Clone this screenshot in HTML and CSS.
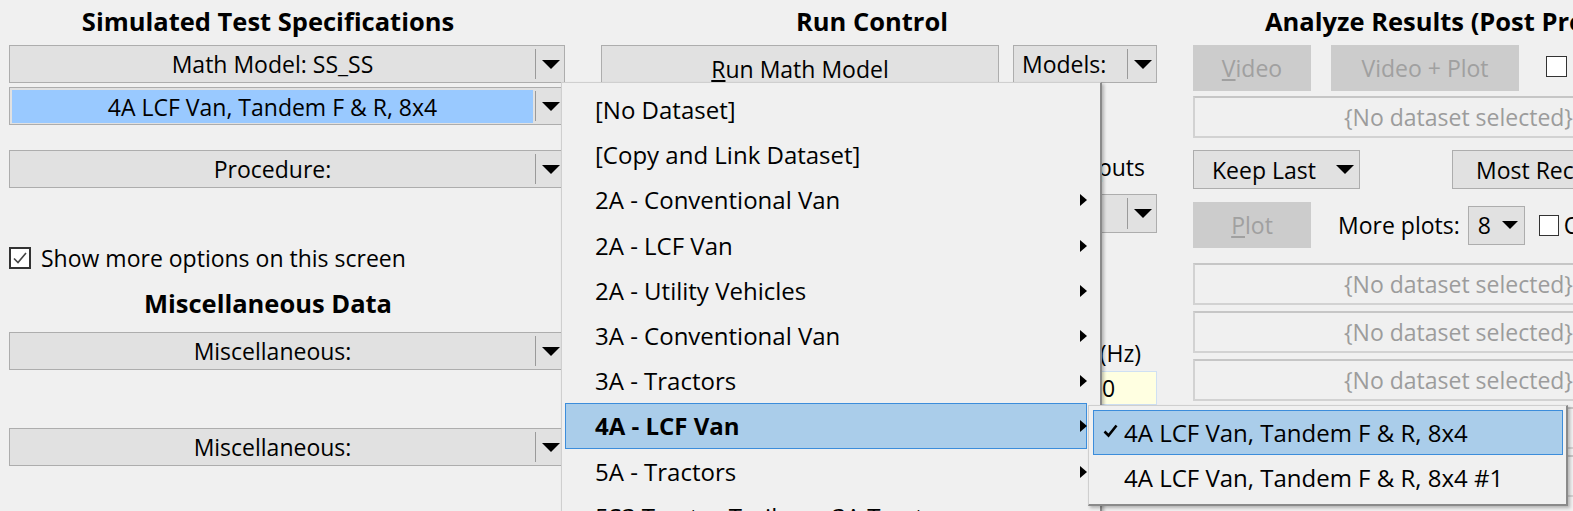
FILE: index.html
```html
<!DOCTYPE html>
<html>
<head>
<meta charset="utf-8">
<link rel="stylesheet" href="styles.css">
</head>
<body>
<div class="screen">
  <section class="col col-left">
    <h2 class="title title-left">Simulated Test Specifications</h2>
    <div class="combo"><span class="combo-text">Math Model: SS_SS</span><span class="combo-btn"><svg width="18" height="9" viewBox="0 0 18 9"><path d="M0 0H18L9 9Z"/></svg></span></div>
    <div class="combo combo-sel gap-4"><span class="combo-text"><span class="sel-fill">4A LCF Van, Tandem F &amp; R, 8x4</span></span><span class="combo-btn"><svg width="18" height="9" viewBox="0 0 18 9"><path d="M0 0H18L9 9Z"/></svg></span></div>
    <div class="combo gap-25"><span class="combo-text">Procedure:</span><span class="combo-btn"><svg width="18" height="9" viewBox="0 0 18 9"><path d="M0 0H18L9 9Z"/></svg></span></div>
    <label class="check-row">
      <span class="checkbox checked"><svg width="18" height="18" viewBox="0 0 18 18"><path d="M3 9.5L7 13.5L15 4" fill="none" stroke="#444" stroke-width="1.6"/></svg></span>
      <span>Show more options on this screen</span>
    </label>
    <h2 class="title title-left title-misc">Miscellaneous Data</h2>
    <div class="combo gap-4"><span class="combo-text">Miscellaneous:</span><span class="combo-btn"><svg width="18" height="9" viewBox="0 0 18 9"><path d="M0 0H18L9 9Z"/></svg></span></div>
    <div class="combo gap-58"><span class="combo-text">Miscellaneous:</span><span class="combo-btn"><svg width="18" height="9" viewBox="0 0 18 9"><path d="M0 0H18L9 9Z"/></svg></span></div>
  </section>

  <section class="col col-mid">
    <h2 class="title title-mid">Run Control</h2>
    <div class="mid-row">
      <div class="button run-btn"><span><u>R</u>un Math Model</span></div>
      <div class="combo combo-models"><span class="combo-text left">Models:</span><span class="combo-btn"><svg width="18" height="9" viewBox="0 0 18 9"><path d="M0 0H18L9 9Z"/></svg></span></div>
    </div>
    <div class="mid-label label-outputs">Outputs</div>
    <div class="combo combo-small"><span class="combo-text"></span><span class="combo-btn"><svg width="18" height="9" viewBox="0 0 18 9"><path d="M0 0H18L9 9Z"/></svg></span></div>
    <div class="mid-label label-hz">Rate (Hz)</div>
    <div class="yellow-input">0</div>
  </section>

  <section class="col col-right">
    <h2 class="title title-right">Analyze Results (Post Processing)</h2>
    <div class="right-row row-video">
      <div class="button disabled btn-video"><span><u>V</u>ideo</span></div>
      <div class="button disabled btn-vplot"><span>Video + Plot</span></div>
      <span class="checkbox cb-video"></span>
    </div>
    <div class="ds-box first-box">{No dataset selected}</div>
    <div class="right-row row-keep">
      <div class="keep-drop"><span>Keep Last</span><svg width="18" height="9" viewBox="0 0 18 9"><path d="M0 0H18L9 9Z"/></svg></div>
      <div class="button btn-recent"><span>Most Recent</span></div>
    </div>
    <div class="right-row row-plot">
      <div class="button disabled btn-plot"><span><u>P</u>lot</span></div>
      <span class="more-label">More plots:</span>
      <div class="num-drop"><span>8</span><svg width="16" height="8" viewBox="0 0 18 9"><path d="M0 0H18L9 9Z"/></svg></div>
      <span class="checkbox cb-overlay"></span>
      <span class="overlay-label">Overlay</span>
    </div>
    <div class="ds-box box-a">{No dataset selected}</div>
    <div class="ds-box">{No dataset selected}</div>
    <div class="ds-box">{No dataset selected}</div>
    <div class="ds-box"></div>
    <div class="ds-box"></div>
  </section>

  <div class="menu">
    <div class="menu-item">[No Dataset]</div>
    <div class="menu-item">[Copy and Link Dataset]</div>
    <div class="menu-item sub">2A - Conventional Van<svg class="arr" width="7" height="12" viewBox="0 0 7 12"><path d="M0 0L7 6L0 12Z"/></svg></div>
    <div class="menu-item sub">2A - LCF Van<svg class="arr" width="7" height="12" viewBox="0 0 7 12"><path d="M0 0L7 6L0 12Z"/></svg></div>
    <div class="menu-item sub">2A - Utility Vehicles<svg class="arr" width="7" height="12" viewBox="0 0 7 12"><path d="M0 0L7 6L0 12Z"/></svg></div>
    <div class="menu-item sub">3A - Conventional Van<svg class="arr" width="7" height="12" viewBox="0 0 7 12"><path d="M0 0L7 6L0 12Z"/></svg></div>
    <div class="menu-item sub">3A - Tractors<svg class="arr" width="7" height="12" viewBox="0 0 7 12"><path d="M0 0L7 6L0 12Z"/></svg></div>
    <div class="menu-item sub active">4A - LCF Van<svg class="arr" width="7" height="12" viewBox="0 0 7 12"><path d="M0 0L7 6L0 12Z"/></svg></div>
    <div class="menu-item sub">5A - Tractors<svg class="arr" width="7" height="12" viewBox="0 0 7 12"><path d="M0 0L7 6L0 12Z"/></svg></div>
    <div class="menu-item sub">5S3 Tractor Trailers - 3A Tractors<svg class="arr" width="7" height="12" viewBox="0 0 7 12"><path d="M0 0L7 6L0 12Z"/></svg></div>
  </div>

  <div class="submenu">
    <div class="menu-item sub-item active"><svg class="check" width="15" height="14" viewBox="0 0 15 14"><path d="M1.5 7.5L5.5 11.5L13.5 1.5" fill="none" stroke="#000" stroke-width="2.6"/></svg>4A LCF Van, Tandem F &amp; R, 8x4</div>
    <div class="menu-item sub-item">4A LCF Van, Tandem F &amp; R, 8x4 #1</div>
  </div>
</div>
</body>
</html>
```

FILE: styles.css
```css
* { box-sizing: border-box; }
html, body {
  margin: 0;
  padding: 0;
  background: #f0f0f0;
}
body {
  width: 1573px;
  height: 511px;
  overflow: hidden;
  font-family: "Open Sans", "Noto Sans", sans-serif;
  font-size: 23px;
  color: #000;
}
.screen {
  position: relative;
  width: 1573px;
  height: 511px;
  display: flex;
  align-items: flex-start;
  padding-left: 9px;
}
.col {
  display: flex;
  flex-direction: column;
  flex: none;
}
.col-left { width: 556px; }
.col-mid { width: 556px; margin-left: 36px; }
.col-right { width: 420px; margin-left: 36px; }

.title {
  margin: 0 0 3px 0;
  height: 42px;
  line-height: 42px;
  font-size: 25.5px;
  font-weight: 700;
  white-space: nowrap;
}
.title-left { text-align: center; padding-right: 38px; }
.title-mid { text-align: center; padding-right: 14px; }
.title-right { padding-left: 72px; }
.title-misc { margin-top: 11px; margin-bottom: 4px; }

.combo {
  display: flex;
  height: 38px;
  border: 1px solid #adadad;
  background: #e1e1e1;
  flex: none;
}
.gap-4 { margin-top: 4px; }
.gap-25 { margin-top: 25px; }
.gap-58 { margin-top: 58px; }
.combo-text {
  flex: 1;
  display: flex;
  align-items: center;
  justify-content: center;
  padding: 1px;
  white-space: nowrap;
}
.combo-text.left { justify-content: flex-start; padding-left: 8px; }
.combo-btn {
  flex: none;
  width: 29px;
  display: flex;
  align-items: center;
  justify-content: center;
  position: relative;
  padding-left: 3px;
}
.combo-btn::before {
  content: "";
  position: absolute;
  left: 0;
  top: 3px;
  bottom: 3px;
  width: 1px;
  background: #9a9a9a;
}
.combo-sel .combo-text { padding: 2px 2px 1px 2px; }
.sel-fill {
  flex: 1;
  align-self: stretch;
  background: #99c9ff;
  display: flex;
  align-items: center;
  justify-content: center;
}

.check-row {
  display: flex;
  align-items: center;
  gap: 10px;
  height: 26px;
  margin-top: 57px;
  white-space: nowrap;
}
.checkbox {
  width: 22px;
  height: 22px;
  border: 2px solid #333;
  background: #fff;
  display: flex;
  align-items: center;
  justify-content: center;
  flex: none;
}

.mid-row {
  display: flex;
  align-items: flex-start;
  gap: 14px;
}
.button {
  border: 1px solid #adadad;
  background: #e1e1e1;
  display: flex;
  align-items: center;
  justify-content: center;
  white-space: nowrap;
  flex: none;
}
.run-btn { width: 398px; height: 48px; }
.combo-models { width: 144px; }
.mid-label {
  text-align: right;
  height: 30px;
  line-height: 30px;
  white-space: nowrap;
}
.label-outputs { margin-top: 59px; padding-right: 12px; }
.combo-small { margin-top: 12px; width: 144px; align-self: flex-end; height: 39px; }
.label-hz { margin-top: 105px; padding-right: 16px; }
.yellow-input {
  margin-top: 3px;
  align-self: flex-end;
  width: 59px;
  height: 34px;
  background: #ffffe1;
  border: 1px solid #cfe0f3;
  line-height: 32px;
  padding-left: 3px;
}

.right-row {
  display: flex;
  align-items: flex-start;
}
.right-row > * { flex: none; }
.disabled {
  background: #cccccc;
  border-color: #cccccc;
  color: #a0a0a0;
}
.btn-video { width: 118px; height: 46px; }
.btn-vplot { width: 188px; height: 46px; margin-left: 20px; }
.cb-video { width: 21px; height: 21px; border-width: 1px; border-color: #333; margin-left: 27px; margin-top: 11px; }
.ds-box {
  height: 42px;
  border: 2px solid #d2d2d2;
  border-top-color: #c6c6c6;
  background: #f0f0f0;
  color: #9c9c9c;
  display: flex;
  align-items: center;
  justify-content: flex-end;
  padding-right: 36px;
  white-space: nowrap;
  margin-top: 6px;
  width: 418px;
  flex: none;
}
.first-box { margin-top: 5px; }
.box-a { margin-top: 15px; }
.row-keep { margin-top: 12px; }
.keep-drop {
  width: 167px;
  height: 39px;
  border: 1px solid #adadad;
  background: #e1e1e1;
  display: flex;
  align-items: center;
  justify-content: space-between;
  padding: 0 5px 0 18px;
}
.btn-recent { width: 170px; height: 39px; margin-left: 92px; justify-content: flex-start; padding-left: 23px; }
.row-plot { margin-top: 13px; align-items: center; height: 46px; }
.btn-plot { width: 118px; height: 46px; }
.more-label { margin-left: 27px; white-space: nowrap; }
.num-drop {
  margin-left: 8px;
  width: 57px;
  height: 39px;
  border: 1px solid #adadad;
  background: #e1e1e1;
  display: flex;
  align-items: center;
  justify-content: space-between;
  padding: 0 6px 0 9px;
}
.cb-overlay { width: 20px; height: 21px; border-width: 1px; margin-left: 14px; }
.overlay-label { margin-left: 5px; }

.menu {
  position: absolute;
  left: 561px;
  top: 82px;
  width: 541px;
  height: 460px;
  background: #f0f0f0;
  border: 1px solid #cfcfcf;
  border-right: 2px solid #8a8a8a;
  box-shadow: 2px 2px 3px rgba(0,0,0,0.25);
  padding: 4px 13px 0 3px;
  font-size: 24px;
}
.menu-item {
  height: 45.2px;
  display: flex;
  align-items: center;
  padding-left: 29px;
  position: relative;
  white-space: nowrap;
  border: 1px solid transparent;
}
.menu-item .arr {
  position: absolute;
  right: -1px;
  top: 16px;
}
.menu-item.active {
  background: #aacdea;
  border-color: #3c8ddb;
}
.menu > .menu-item.active { font-weight: 700; }

.submenu {
  position: absolute;
  left: 1088px;
  top: 405px;
  width: 480px;
  height: 101px;
  background: #f0f0f0;
  border: 1px solid #cfcfcf;
  border-right: 2px solid #8a8a8a;
  border-bottom: 2px solid #8a8a8a;
  box-shadow: 2px 2px 3px rgba(0,0,0,0.25);
  padding: 4px 3px 0 4px;
  font-size: 24px;
}
.sub-item { padding-left: 30px; height: 45px; }
.sub-item .check { position: absolute; left: 9px; top: 13px; }
```
